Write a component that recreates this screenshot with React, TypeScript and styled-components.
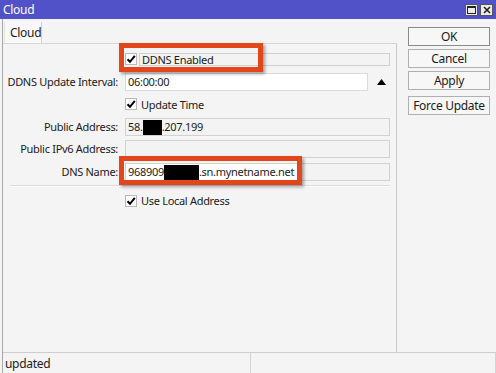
import React from 'react';
import styled, { createGlobalStyle } from 'styled-components';

const GlobalStyle = createGlobalStyle`
  html, body {
    margin: 0;
    padding: 0;
    background: #f4f4f4;
  }
  body {
    font-family: "Noto Sans", "Open Sans", sans-serif;
    font-size: 11px;
    letter-spacing: -0.3px;
    color: #1b1b1b;
  }
`;

const Window = styled.div`
  width: 496px;
  height: 373px;
  display: flex;
  flex-direction: column;
  overflow: hidden;
  background: #f4f4f4;
`;

const TitleBar = styled.div`
  height: 19px;
  flex: none;
  background: #5252c8;
  color: #fff;
  display: flex;
  align-items: center;
  justify-content: space-between;
  padding: 0 3px;
  font-size: 12px;
`;

const TitleButtons = styled.div`
  display: flex;
  gap: 2px;
`;

const TitleButton = styled.div`
  width: 13px;
  height: 12px;
  background: #ececec;
  border: 1px solid #555;
  box-sizing: border-box;
  display: flex;
  align-items: center;
  justify-content: center;
`;

const Frame = styled.div`
  flex: 1;
  display: flex;
  flex-direction: column;
  margin-left: 2px;
  border-left: 1px solid #a8a8a8;
  min-height: 0;
`;

const Body = styled.div`
  flex: 1;
  display: flex;
  min-height: 0;
`;

const Main = styled.div`
  width: 394px;
  display: flex;
  flex-direction: column;
`;

const TabStrip = styled.div`
  height: 24px;
  flex: none;
  display: flex;
  align-items: flex-end;
  padding-left: 1px;
`;

const Tab = styled.div`
  width: 38px;
  height: 21px;
  box-sizing: border-box;
  background: #f9f9f9;
  border-left: 1px solid #e2e2e2;
  border-right: 1px solid #cfcfcf;
  padding-left: 5px;
  display: flex;
  align-items: center;
  font-size: 12px;
`;

const Panel = styled.div`
  flex: 1;
  position: relative;
  border-top: 1px solid #d6d6d6;
  border-right: 1px solid #c9c9c9;
  padding: 6px 6px 0 0;
`;

const Form = styled.div`
  display: grid;
  grid-template-columns: 118px 1fr;
  grid-template-rows: repeat(6, 18px) 2px 18px;
  column-gap: 4px;
  row-gap: 4.5px;
`;

const Label = styled.div`
  text-align: right;
  padding-right: 3px;
  line-height: 18px;
  white-space: nowrap;
  grid-column: 1;
`;

const Cell = styled.div`
  grid-column: 2;
  display: flex;
  align-items: center;
  gap: 2px;
`;

const Field = styled.div<{ $white?: boolean; $lit?: boolean }>`
  flex: 1;
  height: 18px;
  box-sizing: border-box;
  border: 1px solid ${p => (p.$white ? '#dadada' : '#d2d2d2')};
  background: ${p =>
    p.$white ? '#fff' : p.$lit ? 'linear-gradient(to right, #fff 171px, #f3f3f3 171px)' : '#f3f3f3'};
  padding-left: 2px;
  display: flex;
  align-items: center;
  white-space: nowrap;
  overflow: hidden;
`;

const Redact = styled.span<{ $w: number }>`
  display: inline-block;
  width: ${p => p.$w}px;
  height: 16px;
  background: #000;
  margin-top: 2px;
`;

const LabelBox = styled.div`
  flex: 1;
  height: 13px;
  box-sizing: border-box;
  border: 1px solid #d0d0d0;
  background: #f3f3f3;
  padding-left: 2px;
  display: flex;
  align-items: center;
  line-height: 1;
`;

const CheckText = styled.span`
  padding-left: 2px;
`;

const Box = styled.div`
  width: 12px;
  height: 12px;
  flex: none;
  box-sizing: border-box;
  border: 1px solid #b8b8b8;
  background: #fff;
  display: flex;
  align-items: center;
  justify-content: center;
`;

const Spinner = styled.div`
  width: 18px;
  display: flex;
  justify-content: center;
  padding-left: 2px;
`;

const Separator = styled.div`
  grid-column: 1 / -1;
  height: 2px;
  margin-left: 7px;
  border-top: 1px solid #dcdcdc;
  border-bottom: 1px solid #fbfbfb;
  box-sizing: border-box;
`;

const Highlight = styled.div<{ $left: number; $top: number; $w: number }>`
  position: absolute;
  left: ${p => p.$left}px;
  top: ${p => p.$top}px;
  width: ${p => p.$w}px;
  height: 29px;
  box-sizing: border-box;
  border: 5px solid #e2471b;
  box-shadow: 2px 2px 3px rgba(0, 0, 0, 0.35);
  pointer-events: none;
`;

const Side = styled.div`
  flex: 1;
  display: flex;
  flex-direction: column;
  gap: 3px;
  padding: 8px 0 0 11px;
`;

const Button = styled.div<{ $primary?: boolean; $spaced?: boolean }>`
  width: 82px;
  height: 19px;
  box-sizing: border-box;
  border: 1px solid ${p => (p.$primary ? '#8a8a8a' : '#b0b0b0')};
  background: #f7f7f7;
  display: flex;
  align-items: center;
  justify-content: center;
  font-size: 12px;
  margin-top: ${p => (p.$spaced ? '3px' : '0')};
`;

const StatusBar = styled.div`
  height: 21px;
  flex: none;
  display: flex;
  border-top: 1px solid #cdcdcd;
  box-sizing: border-box;
`;

const StatusCell = styled.div<{ $w?: number }>`
  width: ${p => (p.$w ? `${p.$w}px` : 'auto')};
  flex: ${p => (p.$w ? 'none' : '1')};
  border-right: 1px solid #d4d4d4;
  padding-left: 2px;
  display: flex;
  align-items: center;
  font-size: 12px;
`;

const Check = () => (
  <svg width="10" height="10" viewBox="0 0 10 10">
    <path d="M1.5 5.2 L4 7.8 L8.8 1.8" fill="none" stroke="#000" strokeWidth="2" />
  </svg>
);

const Checkbox: React.FC<{ children?: React.ReactNode }> = ({ children }) => (
  <Cell>
    <Box>
      <Check />
    </Box>
    {children}
  </Cell>
);

const App: React.FC = () => (
  <Window>
    <GlobalStyle />
    <TitleBar>
      <span>Cloud</span>
      <TitleButtons>
        <TitleButton>
          <svg width="9" height="8" viewBox="0 0 9 8">
            <rect x="0.5" y="0.5" width="8" height="7" fill="none" stroke="#222" />
            <line x1="0" y1="1.5" x2="9" y2="1.5" stroke="#222" />
          </svg>
        </TitleButton>
        <TitleButton>
          <svg width="8" height="8" viewBox="0 0 8 8">
            <path d="M1 1 L7 7 M7 1 L1 7" stroke="#222" strokeWidth="1.6" />
          </svg>
        </TitleButton>
      </TitleButtons>
    </TitleBar>
    <Frame>
      <Body>
        <Main>
          <TabStrip>
            <Tab>Cloud</Tab>
          </TabStrip>
          <Panel>
            <Form>
              <Checkbox>
                <LabelBox>DDNS Enabled</LabelBox>
              </Checkbox>

              <Label>DDNS Update Interval:</Label>
              <Cell>
                <Field $white>06:00:00</Field>
                <Spinner>
                  <svg width="9" height="6" viewBox="0 0 9 6">
                    <path d="M0 6 L4.5 0 L9 6 Z" fill="#000" />
                  </svg>
                </Spinner>
              </Cell>

              <Checkbox>
                <CheckText>Update Time</CheckText>
              </Checkbox>

              <Label>Public Address:</Label>
              <Cell>
                <Field>
                  58.<Redact $w={19} />.207.199
                </Field>
              </Cell>

              <Label>Public IPv6 Address:</Label>
              <Cell>
                <Field />
              </Cell>

              <Label>DNS Name:</Label>
              <Cell>
                <Field $lit>
                  968909<Redact $w={35} />.sn.mynetname.net
                </Field>
              </Cell>

              <Separator />

              <Checkbox>
                <CheckText>Use Local Address</CheckText>
              </Checkbox>
            </Form>
            <Highlight $left={116} $top={-1} $w={144} />
            <Highlight $left={116} $top={112} $w={183} />
          </Panel>
        </Main>
        <Side>
          <Button $primary>OK</Button>
          <Button>Cancel</Button>
          <Button>Apply</Button>
          <Button $spaced>Force Update</Button>
        </Side>
      </Body>
      <StatusBar>
        <StatusCell $w={245}>updated</StatusCell>
        <StatusCell />
      </StatusBar>
    </Frame>
  </Window>
);

export default App;
